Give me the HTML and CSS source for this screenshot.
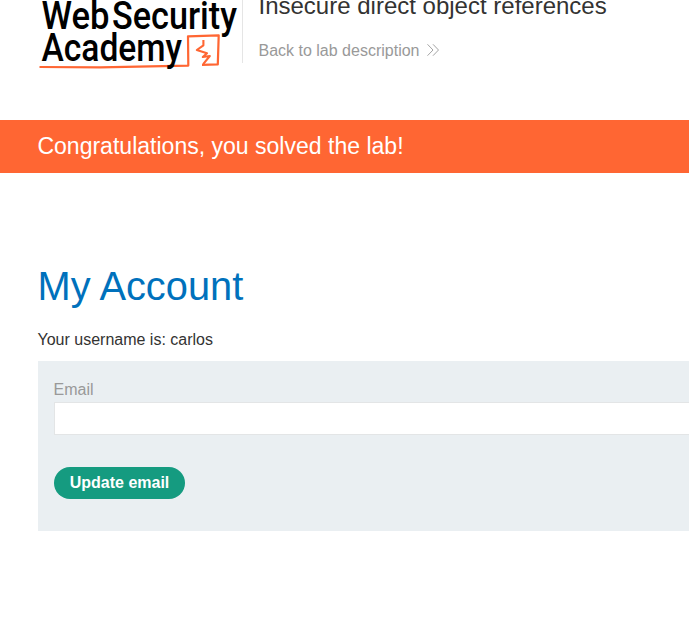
FILE: index.html
```html
<!DOCTYPE html>
<html lang="en">
<head>
<meta charset="utf-8">
<title>Insecure direct object references</title>
<link rel="stylesheet" href="styles.css">
</head>
<body>
<header class="header">
  <svg class="logo" width="205" height="72" viewBox="38 0 205 72" role="img" aria-label="Web Security Academy">
    <g class="logo-text">
      <text x="41.5" y="28.5" textLength="68" lengthAdjust="spacingAndGlyphs">Web</text>
      <text x="112" y="28.5" textLength="125" lengthAdjust="spacingAndGlyphs">Security</text>
    </g>
    <g fill="none" stroke="#ff6633" stroke-linejoin="round">
      <path d="M39.5 67 L100 67.3 L188.3 65.6 L188 36.3 L218.7 35.4 L217.8 64.4 L202 64.8" stroke-width="2.2"/>
      <path d="M203.4 40 L203.4 45.3 L196.8 50 L207 53.2 L202.8 57 L209.8 56 L203.2 64.2" stroke-width="2.1"/>
    </g>
    <text class="logo-text" x="41.5" y="61" textLength="140.5" lengthAdjust="spacingAndGlyphs">Academy</text>
  </svg>
  <div class="title">
    <h2>Insecure direct object references</h2>
    <a class="back">Back to lab description
      <svg width="12" height="12" viewBox="0 0 12 12" fill="none" stroke="#999" stroke-width=".9"><path d="M.5 .3 6 6 .5 11.7M6 .3 11.5 6 6 11.7"/></svg>
    </a>
  </div>
</header>
<section class="banner">Congratulations, you solved the lab!</section>
<main class="content">
  <h1>My Account</h1>
  <p>Your username is: carlos</p>
  <form class="form">
    <label for="email">Email</label>
    <input id="email" type="email">
    <button type="button">Update email</button>
  </form>
</main>
</body>
</html>
```
FILE: styles.css
```css
* { box-sizing: border-box; }
body {
  margin: 0;
  overflow: hidden;
  background: #fff;
  color: #333332;
  font: 16px/20px "Liberation Sans", Arial, sans-serif;
}
.header { display: flex; height: 120px; padding-left: 38px; }
.logo { flex: none; }
.logo-text {
  font: 500 38.4px Roboto, sans-serif;
  fill: #000;
}
.title {
  height: 63px;
  margin-left: -1px;
  padding-left: 15.5px;
  border-left: 1px solid #e5e5e5;
  white-space: nowrap;
}
h2 { margin: -8px 0 0; font-size: 24px; font-weight: 400; line-height: 28px; }
.back { display: flex; align-items: center; gap: 8px; margin-top: 21px; color: #999; }
.back svg { position: relative; top: -1px; }
.banner {
  height: 53px;
  padding-left: 37.4px;
  background: #ff6633;
  color: #fff;
  font-size: 23.04px;
  line-height: 52px;
}
.content { padding: 90px 0 0 38px; }
h1 { margin: 0 0 0 -.5px; color: #0071bc; font-size: 39.8px; font-weight: 400; line-height: 46px; }
p { margin: 21px 0 11px -.5px; }
.form {
  height: 170px;
  padding: 19px 0 19px 16px;
  background: #eaeff2;
}
label { display: block; margin-left: -.4px; color: #999; }
input {
  display: block;
  width: 100%;
  height: 33px;
  margin: 2px 0 32px;
  border: 1px solid #e3e5e6;
  border-right: 0;
  background: #fff;
}
button {
  display: block;
  width: 131px;
  height: 32px;
  padding: 0;
  border: 0;
  border-radius: 16px;
  background: #159b80;
  color: #fff;
  font: bold 16px "Liberation Sans", Arial, sans-serif;
}
```
